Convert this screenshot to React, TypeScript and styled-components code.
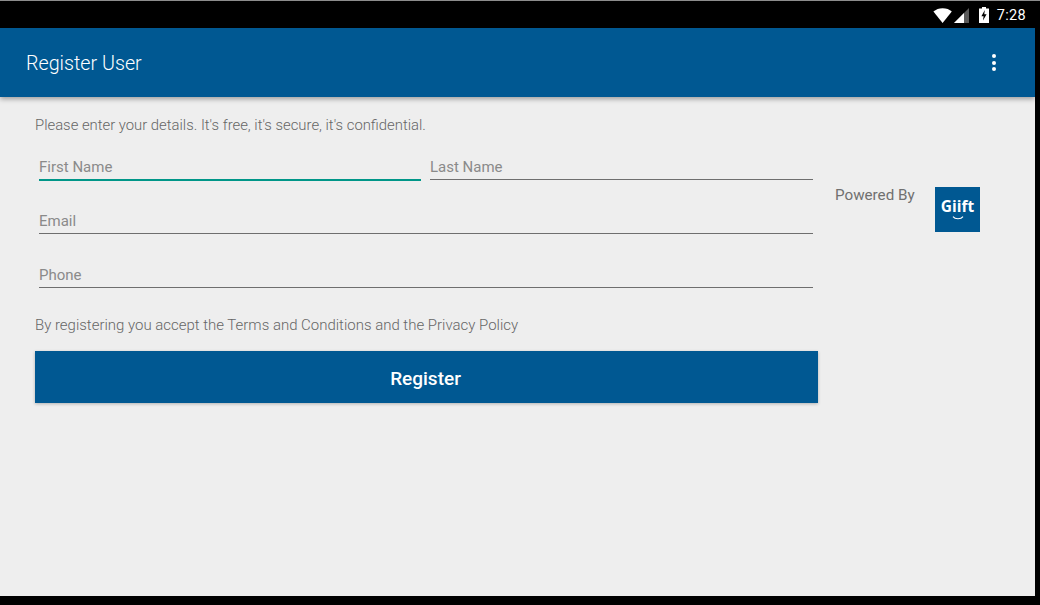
import React from "react"
import styled, { createGlobalStyle } from "styled-components"

const GlobalStyle = createGlobalStyle`
  html, body {
    margin: 0;
    padding: 0;
    background: #000;
  }
  * {
    box-sizing: border-box;
  }
`

export default function App() {
  return (
    <Frame>
      <GlobalStyle />
      <Screen>
        <StatusBar>
          <svg width="20" height="15" viewBox="0 0 20 15">
            <path d="M0.4 3.6C3 1.4 6 0.2 9.6 0.2s7 1.2 9.2 3.4L9.6 15z" fill="#fff" />
          </svg>
          <svg width="15" height="15" viewBox="0 0 15 15">
            <path d="M0 15L15 0v15z" fill="#5a5a5a" />
            <path d="M0 15L10 5v10z" fill="#fff" />
          </svg>
          <BatteryIcon width="10" height="16" viewBox="0 0 10 16">
            <path
              d="M3 0h4v1.5h3V16H0V1.5h3z M5.8 3L2.4 9.2h2.2L4 13.4l3.6-6.2H5.3z"
              fill="#fff"
              fillRule="evenodd"
            />
          </BatteryIcon>
          <Clock>7:28</Clock>
        </StatusBar>
        <Toolbar>
          <Title>Register User</Title>
          <OverflowMenu>
            <Dot />
            <Dot />
            <Dot />
          </OverflowMenu>
        </Toolbar>
        <Content>
          <FormColumn>
            <Intro>Please enter your details. It's free, it's secure, it's confidential.</Intro>
            <FieldRow $split>
              <Field $focused placeholder="First Name" />
              <Field placeholder="Last Name" />
            </FieldRow>
            <FieldRow>
              <Field placeholder="Email" />
            </FieldRow>
            <FieldRow>
              <Field placeholder="Phone" />
            </FieldRow>
            <Terms>By registering you accept the Terms and Conditions and the Privacy Policy</Terms>
            <RegisterButton>Register</RegisterButton>
          </FormColumn>
          <PoweredBy>
            <PoweredLabel>Powered By</PoweredLabel>
            <Logo>
              <LogoText>Giift</LogoText>
              <svg width="12" height="4" viewBox="0 0 12 4">
                <path d="M1 0.6C3 3.4 9 3.4 11 0.6" stroke="#fff" strokeWidth="1.1" fill="none" />
              </svg>
            </Logo>
          </PoweredBy>
        </Content>
      </Screen>
    </Frame>
  )
}

const Frame = styled.div`
  width: 1040px;
  height: 605px;
  overflow: hidden;
  background: #000;
  font-family: Roboto, "Liberation Sans", sans-serif;
`

const Screen = styled.div`
  display: flex;
  flex-direction: column;
  width: 1035px;
  height: 596px;
  background: #eeeeee;
`

const StatusBar = styled.div`
  display: flex;
  flex-shrink: 0;
  justify-content: flex-end;
  align-items: center;
  gap: 1px;
  width: 1040px;
  height: 28px;
  padding: 1px 14px 0 0;
  background: #000;
  border-top: 1px solid #8c8c8c;
`

const BatteryIcon = styled.svg`
  margin-left: 9px;
`

const Clock = styled.span`
  margin-left: 7px;
  font-size: 14.5px;
  font-weight: 400;
  letter-spacing: 0.3px;
  color: #fff;
`

const Toolbar = styled.header`
  position: relative;
  z-index: 1;
  display: flex;
  flex-shrink: 0;
  justify-content: space-between;
  align-items: center;
  height: 69px;
  padding: 0 39px 0 26px;
  background: #005892;
  box-shadow: 0 2px 5px rgba(0, 0, 0, 0.35);
`

const Title = styled.h1`
  margin: 0;
  padding-top: 2px;
  font-size: 19.7px;
  font-weight: 300;
  color: #fff;
`

const OverflowMenu = styled.div`
  display: flex;
  flex-direction: column;
  gap: 2.5px;
`

const Dot = styled.span`
  width: 4px;
  height: 4px;
  border-radius: 50%;
  background: #fff;
`

const Content = styled.main`
  display: flex;
  flex: 1;
  align-items: flex-start;
  padding-left: 35px;
`

const FormColumn = styled.div`
  display: flex;
  flex-direction: column;
  width: 783px;
`

const Intro = styled.p`
  margin: 20px 0 10px;
  font-size: 14.85px;
  font-weight: 300;
  line-height: 17px;
  color: #666;
`

const FieldRow = styled.div<{ $split?: boolean }>`
  display: grid;
  grid-template-columns: ${(props) => (props.$split ? "382px 1fr" : "1fr")};
  gap: 9px;
  height: 54px;
  padding: 0 5px 0 4px;
`

const Field = styled.input<{ $focused?: boolean }>`
  width: 100%;
  min-width: 0;
  height: ${(props) => (props.$focused ? "28px" : "27px")};
  margin-top: 9px;
  padding: 2px 0 0;
  border: none;
  border-bottom: ${(props) => (props.$focused ? "2px solid #009688" : "1px solid #6e6e6e")};
  background: transparent;
  font-family: inherit;
  font-size: 15px;
  line-height: 17px;
  outline: none;

  &::placeholder {
    color: #8a8a8a;
    opacity: 1;
  }
`

const Terms = styled.p`
  margin: 11px 0 0;
  font-size: 14.98px;
  font-weight: 300;
  line-height: 17px;
  color: #666;
`

const RegisterButton = styled.button`
  height: 52px;
  margin-top: 17px;
  padding: 2px 2px 0 0;
  border: none;
  background: #005892;
  box-shadow: 0 1px 3px rgba(0, 0, 0, 0.25);
  font-family: inherit;
  font-size: 19px;
  font-weight: 500;
  color: #fff;
`

const PoweredBy = styled.aside`
  display: flex;
  margin: 90px 0 0 17px;
`

const PoweredLabel = styled.span`
  width: 100px;
  font-size: 15.2px;
  line-height: 17px;
  color: #707070;
`

const Logo = styled.div`
  display: flex;
  flex-direction: column;
  align-items: center;
  justify-content: center;
  width: 45px;
  height: 45px;
  background: #005892;
`

const LogoText = styled.span`
  font-family: "Open Sans", sans-serif;
  font-size: 15.5px;
  font-weight: 700;
  line-height: 15px;
  margin-bottom: 2px;
  color: #fff;
`
